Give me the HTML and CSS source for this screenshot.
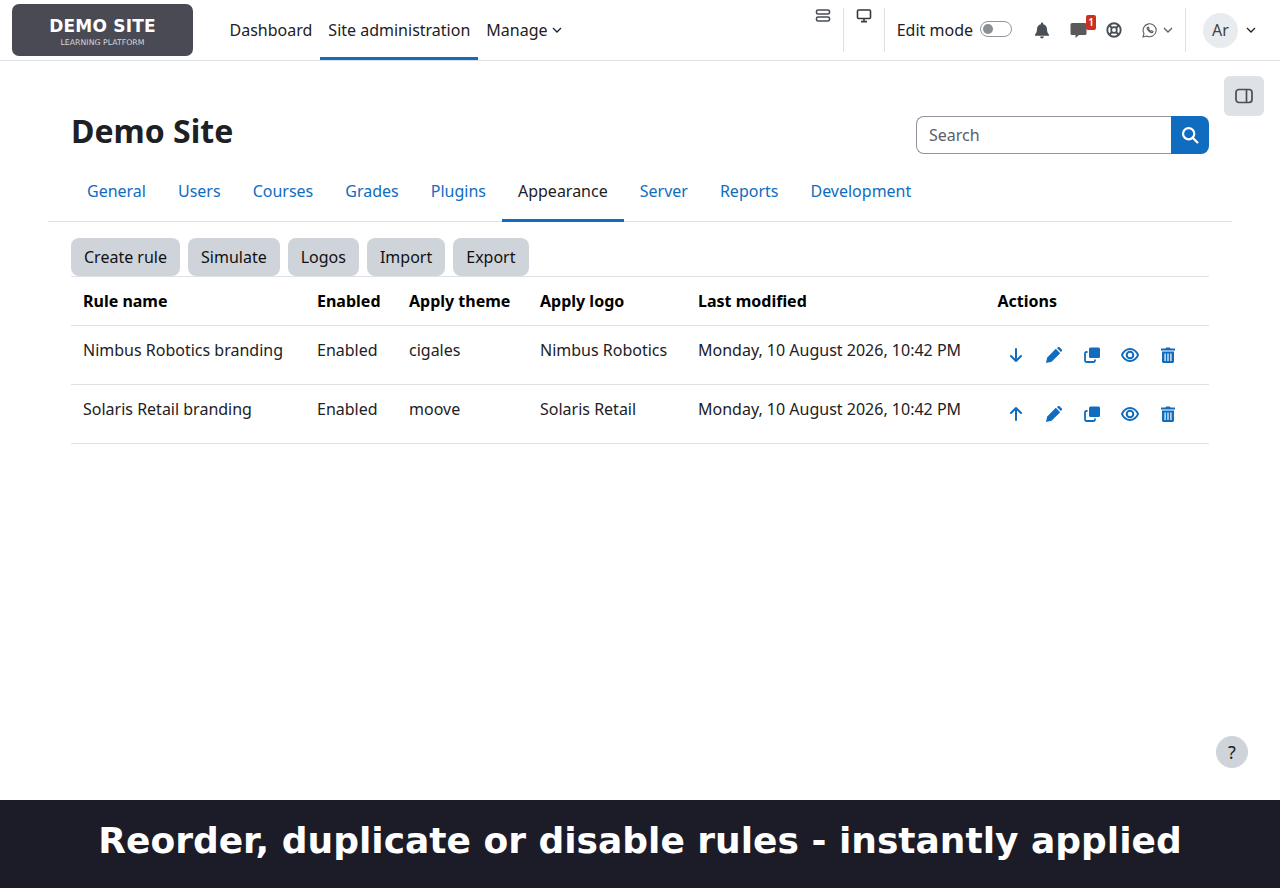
FILE: index.html
```html
<!DOCTYPE html>
<html lang="en">
<head>
  <meta charset="UTF-8" />
  <title>Demo Site</title>
  <link rel="stylesheet" href="styles.css">
</head>
<body>

  <!-- Top navbar -->
  <nav class="navbar">
    <div class="logo">
      <div class="logo-title">DEMO SITE</div>
      <div class="logo-sub">LEARNING PLATFORM</div>
    </div>
    <div class="primary-nav">
      <a class="nav-item">Dashboard</a>
      <a class="nav-item active">Site administration</a>
      <a class="nav-item">Manage <svg class="caret" viewBox="0 0 10 10"><path d="M1 3l4 4 4-4"/></svg></a>
    </div>
    <div class="nav-tools">
      <div class="tool-cell first">
        <svg class="tool-top" width="16" height="14" viewBox="0 0 16 14" fill="none" stroke="#4a4f55" stroke-width="1.600"><rect x="1.500" y="1" width="13" height="4" rx="1.600"/><rect x="1.500" y="8" width="13" height="4" rx="1.600"/></svg>
      </div>
      <div class="tool-cell">
        <svg class="tool-top" width="16" height="14" viewBox="0 0 16 14" fill="none" stroke="#343a40" stroke-width="1.600"><rect x="1.500" y="1" width="13" height="8.500" rx="1"/><path d="M5 12.600h6M8 9.500v3"/></svg>
      </div>
      <div class="edit-mode">
        <span>Edit mode</span>
        <span class="switch"><span class="knob"></span></span>
      </div>
      <svg class="ic-bell" width="16" height="17" viewBox="0 0 16 17" fill="#4a4f55"><path d="M8 0.500c-.7 0-1.100.5-1.100 1.100v.6C4.500 2.700 3 4.600 3 7c0 3.200-.9 4.300-1.900 5.400-.4.500-.1 1.300.6 1.300h12.600c.7 0 1-.8.6-1.300C13.900 11.300 13 10.200 13 7c0-2.400-1.500-4.300-3.900-4.800v-.6C9.100 1 8.700.5 8 .5z"/><path d="M6 14.600h4c0 1.100-.9 1.900-2 1.900s-2-.8-2-1.900z"/></svg>
      <div class="msg">
        <svg width="17" height="17" viewBox="0 0 17 17" fill="#5a5a5a"><path d="M2 1h13a1.500 1.500 0 0 1 1.500 1.500v9A1.500 1.500 0 0 1 15 13H9l-3.500 3v-3H2A1.500 1.500 0 0 1 .5 11.500v-9A1.500 1.500 0 0 1 2 1z"/></svg>
        <span class="badge">1</span>
      </div>
      <svg class="ic-help" width="16" height="16" viewBox="0 0 16 16" fill="none" stroke="#4a4f55"><circle cx="8" cy="8" r="6.700" stroke-width="1.900"/><circle cx="8" cy="8" r="2.800" stroke-width="1.700"/><path stroke-width="2" d="M3.300 3.300l2.700 2.700M12.700 3.300L10 6M3.300 12.700L6 10M12.700 12.700L10 10"/></svg>
      <svg class="ic-wa" width="15" height="15" viewBox="0 0 15 15" fill="none" stroke="#5a6067" stroke-width="1.100"><path d="M1 14l1-3.500A6.500 6.500 0 1 1 4.600 13z"/><path d="M5.200 4.400c-.7 2 2.700 5.700 5.300 5.200l.5-1.200-1.600-.8-.7.7C7.600 7.900 6.900 7.200 6.500 6.200l.6-.7-.7-1.400z"/></svg>
      <svg class="caret small" viewBox="0 0 10 10"><path d="M1 3l4 4 4-4"/></svg>
      <div class="user-menu">
        <span class="avatar">Ar</span>
        <svg class="caret" viewBox="0 0 10 10"><path d="M1 3l4 4 4-4"/></svg>
      </div>
    </div>
  </nav>

  <button class="drawer-toggle">
    <svg width="20" height="18" viewBox="0 0 20 18" fill="none" stroke="#4a4f55" stroke-width="1.700"><rect x="2" y="2.500" width="16" height="13" rx="3"/><path d="M12.500 2.500v13"/></svg>
  </button>

  <div class="page">
    <header class="page-head">
      <h1>Demo Site</h1>
      <div class="search">
        <div class="search-input">Search</div>
        <div class="search-btn">
          <svg width="18" height="18" viewBox="0 0 16 16" fill="none" stroke="#fff" stroke-width="2"><circle cx="6.800" cy="6.800" r="5"/><path stroke-linecap="round" d="M10.600 10.600l4 4"/></svg>
        </div>
      </div>
    </header>

    <!-- Admin tabs -->
    <div class="tabs">
      <a class="tab">General</a>
      <a class="tab">Users</a>
      <a class="tab">Courses</a>
      <a class="tab">Grades</a>
      <a class="tab">Plugins</a>
      <a class="tab active">Appearance</a>
      <a class="tab">Server</a>
      <a class="tab">Reports</a>
      <a class="tab">Development</a>
    </div>

    <div class="content">
      <div class="buttons">
        <button>Create rule</button>
        <button>Simulate</button>
        <button>Logos</button>
        <button>Import</button>
        <button>Export</button>
      </div>

      <table class="rules">
        <thead>
          <tr>
            <th class="col-name">Rule name</th>
            <th class="col-enabled">Enabled</th>
            <th class="col-theme">Apply theme</th>
            <th class="col-logo">Apply logo</th>
            <th class="col-date">Last modified</th>
            <th>Actions</th>
          </tr>
        </thead>
        <tbody>
          <tr>
            <td>Nimbus Robotics branding</td>
            <td>Enabled</td>
            <td>cigales</td>
            <td>Nimbus Robotics</td>
            <td>Monday, 10 August 2026, 10:42 PM</td>
            <td>
              <div class="actions">
                <svg viewBox="0 0 16 16" fill="none" stroke="#0f6cbf" stroke-width="2" stroke-linecap="round" stroke-linejoin="round"><path d="M8 2v12M3 9l5 5 5-5"/></svg>
                <svg viewBox="0 0 16 16" fill="#0f6cbf"><path d="M0 16l1.200-5.600 8.600-8.600 4.400 4.400-8.600 8.600z"/><path d="M10.900 1.100l.8-.7a1.500 1.500 0 0 1 2.100 0l1.800 1.800a1.500 1.500 0 0 1 0 2.100l-.7.800z"/></svg>
                <svg viewBox="0 0 16 16" fill="#0f6cbf"><rect x="5" y="0.500" width="11" height="10.500" rx="1.500"/><path fill="none" stroke="#0f6cbf" stroke-width="1.800" d="M3.500 5H2.400C1.600 5 1 5.600 1 6.400v7.200c0 .8.600 1.400 1.400 1.400h7.200c.8 0 1.400-.6 1.400-1.400V12.500"/></svg>
                <svg class="eye" viewBox="0 0 18 16" fill="none" stroke="#0f6cbf"><path stroke-width="1.800" d="M.9 8C2.800 4 5.500 2 9 2s6.200 2 8.100 6c-1.900 4-4.600 6-8.100 6S2.800 12 .9 8z"/><circle cx="9" cy="8" r="3.300" stroke-width="2"/></svg>
                <svg viewBox="0 0 16 16" fill="#0f6cbf"><path d="M5.500 1.500L6.200.5h3.600l.7 1H15v2H1v-2z"/><path fill-rule="evenodd" d="M2 4.500h12v10c0 .8-.6 1.400-1.400 1.400H3.400C2.600 15.900 2 15.300 2 14.500zM4.500 6.500v7.500h1.200V6.500zm2.900 0v7.500h1.200V6.500zm2.900 0v7.500h1.200V6.500z"/></svg>
              </div>
            </td>
          </tr>
          <tr>
            <td>Solaris Retail branding</td>
            <td>Enabled</td>
            <td>moove</td>
            <td>Solaris Retail</td>
            <td>Monday, 10 August 2026, 10:42 PM</td>
            <td>
              <div class="actions">
                <svg viewBox="0 0 16 16" fill="none" stroke="#0f6cbf" stroke-width="2" stroke-linecap="round" stroke-linejoin="round"><path d="M8 14V2M3 7l5-5 5 5"/></svg>
                <svg viewBox="0 0 16 16" fill="#0f6cbf"><path d="M0 16l1.200-5.600 8.600-8.600 4.400 4.400-8.600 8.600z"/><path d="M10.900 1.100l.8-.7a1.500 1.500 0 0 1 2.100 0l1.800 1.800a1.500 1.500 0 0 1 0 2.100l-.7.800z"/></svg>
                <svg viewBox="0 0 16 16" fill="#0f6cbf"><rect x="5" y="0.500" width="11" height="10.500" rx="1.500"/><path fill="none" stroke="#0f6cbf" stroke-width="1.800" d="M3.500 5H2.400C1.600 5 1 5.600 1 6.400v7.200c0 .8.600 1.400 1.400 1.400h7.200c.8 0 1.400-.6 1.400-1.400V12.500"/></svg>
                <svg class="eye" viewBox="0 0 18 16" fill="none" stroke="#0f6cbf"><path stroke-width="1.800" d="M.9 8C2.800 4 5.500 2 9 2s6.200 2 8.100 6c-1.900 4-4.600 6-8.100 6S2.800 12 .9 8z"/><circle cx="9" cy="8" r="3.300" stroke-width="2"/></svg>
                <svg viewBox="0 0 16 16" fill="#0f6cbf"><path d="M5.500 1.500L6.200.5h3.600l.7 1H15v2H1v-2z"/><path fill-rule="evenodd" d="M2 4.500h12v10c0 .8-.6 1.400-1.400 1.400H3.400C2.600 15.900 2 15.300 2 14.500zM4.500 6.500v7.500h1.200V6.500zm2.900 0v7.500h1.200V6.500zm2.900 0v7.500h1.200V6.500z"/></svg>
              </div>
            </td>
          </tr>
        </tbody>
      </table>
    </div>
  </div>

  <button class="help-btn">?</button>

  <footer class="banner">Reorder, duplicate or disable rules - instantly applied</footer>

</body>
</html>
```

FILE: styles.css
```css
html, body {
  height: 100%;
}

body {
  font-family: "Noto Sans", sans-serif;
  font-size: 16px;
  line-height: 24px;
  color: #1d2125;
  background: #fff;
  margin: 0;
  display: flex;
  flex-direction: column;
  overflow: hidden;
}

/* Navbar */
.navbar {
  height: 60px;
  flex: none;
  display: flex;
  align-items: stretch;
  border-bottom: 1px solid #dee2e6;
  padding: 0 12px;
}

.logo {
  width: 181px;
  height: 52px;
  margin-top: 4px;
  background: #4a4a55;
  border-radius: 7px;
  color: #fff;
  font-family: "DejaVu Sans", sans-serif;
  text-align: center;
}

.logo-title {
  font-size: 17px;
  font-weight: bold;
  line-height: 20px;
  margin-top: 12px;
  letter-spacing: 0.2px;
}

.logo-sub {
  font-size: 7.800px;
  line-height: 10px;
  margin-top: 2px;
  color: #d5d5da;
}

.primary-nav {
  display: flex;
  margin-left: 28.500px;
}

.nav-item {
  display: flex;
  align-items: center;
  gap: 4px;
  padding: 0 8px;
  height: 60px;
  box-sizing: border-box;
}

.nav-item.active {
  border-bottom: 3px solid #0f6cbf;
  padding-top: 3px;
}

.caret {
  width: 10px;
  height: 10px;
  fill: none;
  stroke: #1d2125;
  stroke-width: 1.300;
}

.caret.small {
  stroke: #5a6067;
  margin-left: 6px;
}

.nav-tools {
  margin-left: auto;
  display: flex;
  align-items: center;
  height: 60px;
}

.tool-cell {
  width: 41px;
  height: 44px;
  border-right: 1px solid #dee2e6;
  display: flex;
  justify-content: center;
  align-items: flex-start;
  box-sizing: border-box;
}

.tool-cell.first {
  width: 40px;
}

.tool-top {
  margin-top: 1px;
}

.edit-mode {
  display: flex;
  align-items: center;
  gap: 7px;
  margin-left: 12px;
}

.switch {
  width: 32px;
  height: 16px;
  margin-bottom: 2px;
  border: 1px solid #8f959e;
  border-radius: 8px;
  box-sizing: border-box;
  display: flex;
  align-items: center;
  padding-left: 2px;
}

.knob {
  width: 10px;
  height: 10px;
  background: #8a8f94;
  border-radius: 50%;
}

.ic-bell {
  margin-left: 22px;
}

.msg {
  position: relative;
  margin-left: 20px;
  height: 17px;
}

.msg svg {
  display: block;
}

.badge {
  position: absolute;
  top: -7px;
  left: 16px;
  width: 10px;
  height: 15px;
  background: #ca3120;
  border-radius: 2px;
  color: #fff;
  font-size: 10px;
  line-height: 15px;
  text-align: center;
  font-weight: 600;
}

.ic-help {
  margin-left: 19px;
}

.ic-wa {
  margin-left: 20px;
}

.user-menu {
  display: flex;
  align-items: center;
  gap: 8px;
  height: 44px;
  margin-left: 12px;
  padding-left: 17px;
  padding-right: 12px;
  border-left: 1px solid #dee2e6;
}

.avatar {
  width: 35px;
  height: 35px;
  border-radius: 50%;
  background: #e9ecef;
  color: #3d4248;
  text-align: center;
  line-height: 35px;
}

/* Floating buttons */
.drawer-toggle {
  position: absolute;
  top: 76px;
  right: 16px;
  width: 40px;
  height: 40px;
  background: #dee2e6;
  border: none;
  border-radius: 6px;
  padding: 0;
  display: flex;
  align-items: center;
  justify-content: center;
}

.help-btn {
  position: absolute;
  top: 736px;
  left: 1216px;
  width: 32px;
  height: 32px;
  border: none;
  border-radius: 50%;
  background: #ced4da;
  color: #1d2125;
  font-family: "Noto Sans", sans-serif;
  font-size: 18px;
  padding: 0;
}

/* Page */
.page {
  flex: 1;
  padding: 0 48px;
}

.page-head {
  display: flex;
  justify-content: space-between;
  align-items: flex-start;
  padding: 48px 23px 0;
  height: 45px;
}

h1 {
  margin: 0;
  font-size: 32px;
  line-height: 44px;
  font-weight: 700;
}

.search {
  display: flex;
  width: 293px;
  height: 38px;
  margin-top: 7px;
}

.search-input {
  flex: 1;
  border: 1px solid #8f959e;
  border-right: none;
  border-radius: 8px 0 0 8px;
  padding: 6px 12px;
  color: #5a6067;
  line-height: 24px;
}

.search-btn {
  width: 38px;
  background: #0f6cbf;
  border-radius: 0 8px 8px 0;
  display: flex;
  align-items: center;
  justify-content: center;
}

.tabs {
  display: flex;
  margin-top: 17px;
  height: 50px;
  padding-left: 23px;
  border-bottom: 1px solid #dee2e6;
}

.tab {
  color: #0f6cbf;
  padding: 8px 16px 0;
  height: 51px;
  box-sizing: border-box;
}

.tab.active {
  color: #1d2125;
  border-bottom: 3px solid #0f6cbf;
}

.content {
  padding: 16px 23px 0;
}

.buttons {
  display: flex;
  gap: 8px;
}

.buttons button {
  height: 38px;
  padding: 0 13px;
  font-family: inherit;
  font-size: 16px;
  color: #111;
  background: #ced4da;
  border: none;
  border-radius: 8px;
}

.rules {
  width: 100%;
  border-collapse: collapse;
  border-top: 1px solid #dee2e6;
  table-layout: fixed;
}

.rules th {
  text-align: left;
  font-weight: 700;
  color: #000;
  padding: 12px;
  border-bottom: 1px solid #dee2e6;
}

.rules td {
  padding: 12px;
  vertical-align: top;
  height: 34px;
  border-bottom: 1px solid #dee2e6;
}

.col-name { width: 210px; }
.col-enabled { width: 68px; }
.col-theme { width: 107px; }
.col-logo { width: 134px; }
.col-date { width: 275.500px; }

.actions {
  display: flex;
  gap: 22px;
  padding: 9px 0 0 10px;
}

.actions svg {
  width: 16px;
  height: 16px;
  flex: none;
}

.actions svg.eye {
  width: 18px;
  margin: 0 -1px;
}

/* Caption */
.banner {
  flex: none;
  height: 88px;
  background: #1c1c28;
  color: #fff;
  font-family: "DejaVu Sans", sans-serif;
  font-size: 36px;
  font-weight: bold;
  line-height: 82px;
  text-align: center;
}
```
